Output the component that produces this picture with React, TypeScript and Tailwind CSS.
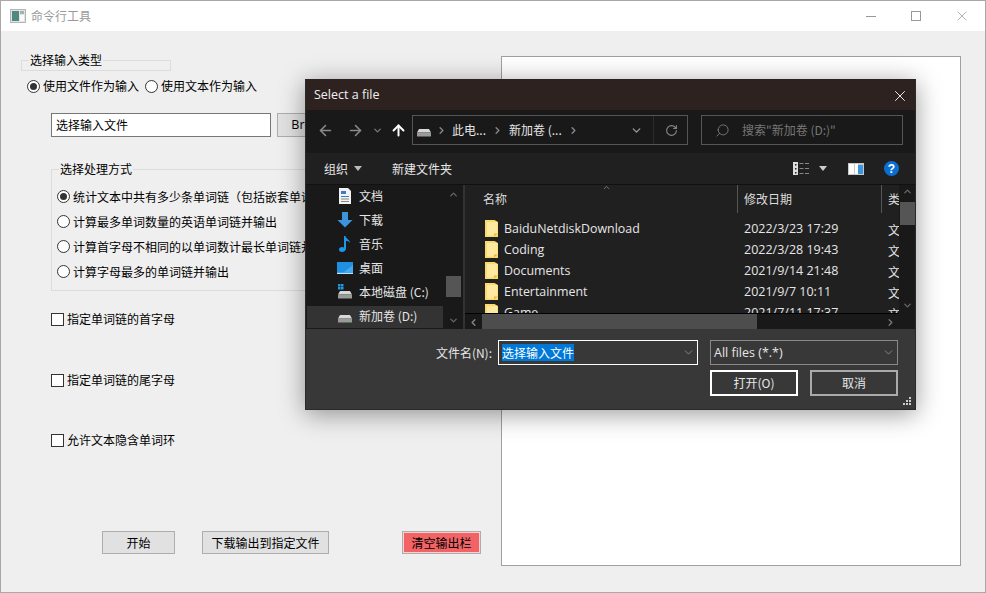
import { ArrowLeft, ArrowRight, ArrowUp, ChevronDown, ChevronRight, ChevronUp, ChevronLeft, RotateCw, Search, X } from "lucide-react";

const cjk = "font-['Noto_Sans_CJK_SC','Noto_Sans',sans-serif]";

function Radio({ checked = false }: { checked?: boolean }) {
  return (
    <span className="w-[13px] h-[13px] rounded-full border border-[#333] bg-white flex items-center justify-center shrink-0">
      {checked && <span className="w-[7px] h-[7px] rounded-full bg-[#333]" />}
    </span>
  );
}

function RadioRow({ label, checked }: { label: string; checked?: boolean }) {
  return (
    <div className="h-[25px] flex items-center gap-[3px] whitespace-nowrap">
      <Radio checked={checked} />
      <span>{label}</span>
    </div>
  );
}

function Check({ label, className }: { label: string; className: string }) {
  return (
    <div className={`h-[16px] ml-[50px] flex items-center gap-[3px] ${className}`}>
      <span className="w-[13px] h-[13px] border border-[#333] bg-white shrink-0" />
      <span>{label}</span>
    </div>
  );
}

function DriveIcon({ win = false }: { win?: boolean }) {
  return (
    <svg width="16" height="16" viewBox="0 0 16 16">
      {win && (
        <g fill="#1e9be8">
          <rect x="1" y="0" width="2.5" height="2.5" />
          <rect x="4" y="0" width="2.5" height="2.5" />
          <rect x="1" y="3" width="2.5" height="2.5" />
          <rect x="4" y="3" width="2.5" height="2.5" />
        </g>
      )}
      <path d="M3 7h10l2 3.5H1z" fill="#d8d8d8" />
      <rect x="1" y="10.5" width="14" height="4" fill="#9a9a9a" />
      <rect x="11.5" y="12" width="1.5" height="1.2" fill="#55d055" />
    </svg>
  );
}

function Folder() {
  return (
    <svg width="13" height="17" viewBox="0 0 13 17" className="shrink-0 -translate-y-px">
      <path d="M0 0h9.500L13 2v15H0z" fill="#fbd96b" />
      <path d="M2 2h10.500v11.500H9V15.500H2z" fill="#ffe9a0" />
      <path d="M9 16.500v-3h3.500z" fill="#e8b93f" />
    </svg>
  );
}

function NavRow({ icon, label, active }: { icon: React.ReactNode; label: string; active?: boolean }) {
  return (
    <div className={active ? "h-[22px] mt-[2px] pb-[2px] bg-[#333] flex items-center mx-px" : "h-[24px] flex items-center mx-px"}>
      <span className="w-[25px] ml-[25px] mr-[2px] flex justify-center">{icon}</span>
      <span className="text-[#e6e6e6]">{label}</span>
    </div>
  );
}

const files = [
  ["BaiduNetdiskDownload", "2022/3/23 17:29"],
  ["Coding", "2022/3/28 19:43"],
  ["Documents", "2021/9/14 21:48"],
  ["Entertainment", "2021/9/7 10:11"],
  ["Game", "2021/7/11 17:37"],
];

function FileDialog() {
  return (
    <div className={`absolute left-[304px] top-[78px] w-[611px] h-[331px] bg-[#383838] border border-[#2a2a2a] border-t-0 shadow-[0_4px_24px_rgba(0,0,0,0.4)] flex flex-col text-[12px] text-[#e6e6e6] ${cjk}`}>
      <div className="h-[31px] bg-[#2e2221] flex items-center justify-between pl-[8px] pr-[6px] pt-[2px] shrink-0">
        <span className="text-[12.5px] text-[#f0f0f0] font-['Open_Sans',sans-serif]">Select a file</span>
        <X size={18} strokeWidth={1.2} className="text-white" />
      </div>

      <div className="h-[43px] bg-[#191919] flex items-start pt-[5px] shrink-0">
        <div className="w-[106px] h-[30px] flex items-center pl-[11px]">
          <ArrowLeft size={17} strokeWidth={2.2} className="text-[#8a8a8a]" />
          <ArrowRight size={17} strokeWidth={2.2} className="text-[#8a8a8a] ml-[13px]" />
          <ChevronDown size={11} strokeWidth={3} className="text-[#777] ml-[8px]" />
          <ArrowUp size={17} strokeWidth={2.8} className="text-white ml-[7px]" />
        </div>
        <div className="w-[276px] h-[30px] border border-[#555] flex items-center">
          <span className="ml-[3px] flex"><DriveIcon /></span>
          <ChevronRight size={11} strokeWidth={3} className="text-[#888] ml-[4px]" />
          <span className="ml-[5px]">此电...</span>
          <ChevronRight size={11} strokeWidth={3} className="text-[#888] ml-[6px]" />
          <span className="ml-[6px]">新加卷 (...</span>
          <ChevronRight size={11} strokeWidth={3} className="text-[#888] ml-[6px]" />
          <span className="flex-1" />
          <span className="w-[33px] h-full flex items-center justify-center">
            <ChevronDown size={13} strokeWidth={2.5} className="text-[#999]" />
          </span>
          <span className="w-[34px] h-full border-l border-[#2c2c2c] flex items-center justify-center pl-px">
            <RotateCw size={13} strokeWidth={2} className="text-[#888]" />
          </span>
        </div>
        <div className="ml-[13px] w-[202px] h-[30px] border border-[#555] flex items-center pl-[13px] text-[#777]">
          <Search size={15} strokeWidth={1.5} className="text-[#777] -scale-x-100" />
          <span className="ml-[12px]">搜索"新加卷 (D:)"</span>
        </div>
      </div>

      <div className="h-[31px] bg-[#202020] flex items-center pl-[18px] shrink-0">
        <span>组织</span>
        <span className="ml-[6px] w-0 h-0 border-x-[4px] border-x-transparent border-t-[5px] border-t-[#bbb]" />
        <span className="ml-[30px]">新建文件夹</span>
        <span className="flex-1" />
        <svg width="17" height="13" viewBox="0 0 17 13">
          <rect x="0" y="0" width="5" height="13" fill="#ddd" />
          <g fill="#222">
            <rect x="2" y="2" width="1.5" height="1.5" />
            <rect x="2" y="6" width="1.5" height="1.5" />
            <rect x="2" y="10" width="1.5" height="1.5" />
          </g>
          <g fill="#888">
            <rect x="6.5" y="1" width="4" height="1" />
            <rect x="12" y="1" width="4" height="1" />
            <rect x="6.5" y="6" width="4" height="1" />
            <rect x="12" y="6" width="4" height="1" />
            <rect x="6.5" y="11" width="4" height="1" />
            <rect x="12" y="11" width="4" height="1" />
          </g>
        </svg>
        <span className="ml-[9px] w-0 h-0 border-x-[4px] border-x-transparent border-t-[5px] border-t-[#ccc]" />
        <svg width="16" height="12" viewBox="0 0 16 12" className="ml-[21px]">
          <rect width="16" height="12" fill="#c8c8c8" />
          <rect x="1" y="1" width="5" height="10" fill="#fff" />
          <rect x="7" y="1" width="3" height="10" fill="#fff" />
          <rect x="10" y="2" width="5" height="9" fill="#3c95e0" />
        </svg>
        <span className="ml-[20px] mr-[16px] w-[15px] h-[15px] rounded-full bg-[#0a6fd0] flex items-center justify-center text-white text-[12px] font-bold leading-none font-['Liberation_Sans',sans-serif]">?</span>
      </div>

      <div className="h-[145px] flex border-t border-[#111] shrink-0 bg-[#191919]">
        <div className="w-[138px] shrink-0 overflow-hidden -mt-px">
          <NavRow label="文档" icon={
            <svg width="12" height="16" viewBox="0 0 12 16">
              <path d="M0 0h9l3 3v13H0z" fill="#f2f2f2" />
              <g fill="#3a7fc4"><rect x="2" y="3" width="5" height="3" /><rect x="2" y="8" width="8" height="1" /></g>
              <g fill="#888"><rect x="2" y="10.5" width="8" height="1" /><rect x="2" y="13" width="8" height="1" /></g>
            </svg>} />
          <NavRow label="下载" icon={
            <svg width="16" height="16" viewBox="0 0 16 16">
              <path d="M5 0h6v8h4.500L8 15.500 0.500 8H5z" fill="#3d94dc" />
            </svg>} />
          <NavRow label="音乐" icon={
            <svg width="12" height="16" viewBox="0 0 12 16">
              <path d="M5 0h1.500c0.300 3 4.500 3.500 4.500 7-1-1.500-2.500-2.200-4-2.300V12.500C7 14.500 5 16 3 16S0 15 0 13.500 1.500 11 3 11c0.800 0 1.500 0.200 2 0.500z" fill="#1c97ea" />
            </svg>} />
          <NavRow label="桌面" icon={
            <svg width="16" height="12" viewBox="0 0 16 12">
              <rect width="16" height="12" fill="#1f8fe0" />
              <rect y="10.800" width="16" height="1.200" fill="#bfe2fa" />
              <path d="M6 10.800L16 3v7.800z" fill="#46a9ee" />
            </svg>} />
          <NavRow label="本地磁盘 (C:)" icon={<DriveIcon win />} />
          <NavRow label="新加卷 (D:)" active icon={<DriveIcon />} />
        </div>
        <div className="w-[19px] shrink-0 flex flex-col items-center">
          <ChevronUp size={11} strokeWidth={3} className="text-[#666] mt-[4px]" />
          <div className="w-[15px] h-[21px] bg-[#555] mt-[76px]" />
          <span className="flex-1" />
          <ChevronDown size={11} strokeWidth={3} className="text-[#666] mb-[3px]" />
        </div>
        <div className="w-[2px] shrink-0 bg-[#333]" />
        <div className="flex-1 min-w-0 flex flex-col bg-[#202020]">
          <div className="h-[128px] overflow-hidden shrink-0">
            <div className="h-[28px] flex items-center text-[#dcdcdc]">
              <div className="w-[273px] h-full pl-[18px] flex items-center border-r border-[#555] relative">
                <span>名称</span>
                <ChevronUp size={9} strokeWidth={1.5} className="absolute left-[137px] -top-[2px] text-[#bbb]" />
              </div>
              <div className="w-[144px] h-full pl-[6px] flex items-center border-r border-[#555]">修改日期</div>
              <div className="pl-[6px] w-[17px] overflow-hidden whitespace-nowrap">类型</div>
            </div>
            <div className="pt-[6px]">
              {files.map(([name, date]) => (
                <div key={name} className="h-[21px] flex items-center text-[#e6e6e6]">
                  <div className="w-[272px] flex items-center pl-[20px] gap-[6px]">
                    <Folder />
                    <span className="text-[12.4px] font-['Open_Sans',sans-serif]">{name}</span>
                  </div>
                  <div className="w-[144px] pl-[7px] text-[12.5px] font-['Open_Sans',sans-serif]">{date}</div>
                  <div className="w-[11px] ml-[7px] overflow-hidden">文</div>
                </div>
              ))}
            </div>
          </div>
          <div className="h-[17px] flex bg-[#191919] border-t border-[#000] shrink-0">
            <div className="w-[17px] flex items-center justify-center">
              <ChevronLeft size={11} strokeWidth={3} className="text-[#888]" />
            </div>
            <div className="w-[275px] bg-[#4d4d4d]" />
            <span className="flex-1" />
            <div className="w-[17px] flex items-center justify-center">
              <ChevronRight size={11} strokeWidth={3} className="text-[#777]" />
            </div>
          </div>
        </div>
        <div className="w-[16px] shrink-0 flex flex-col items-center bg-[#191919]">
          <ChevronUp size={11} strokeWidth={3} className="text-[#666] mt-[1px]" />
          <div className="w-[15px] h-[23px] bg-[#555] mt-[5px]" />
          <span className="flex-1" />
          <ChevronDown size={11} strokeWidth={3} className="text-[#666] mb-[18px]" />
        </div>
      </div>

      <div className="flex-1 bg-[#383838] relative pt-[11px]">
        <div className="flex items-center">
          <span className="w-[192px] text-right pr-[6px]">文件名(N):</span>
          <div className="w-[200px] h-[25px] border border-white flex items-center pl-[3px]">
            <span className="bg-[#0078d7] text-white leading-[17px] h-[17px]">选择输入文件</span>
            <span className="flex-1" />
            <ChevronDown size={13} strokeWidth={1.2} className="text-[#aaa] mr-[2px]" />
          </div>
          <div className="ml-[12px] w-[188px] h-[25px] border border-[#8a8a8a] flex items-center pl-[3px]">
            <span className="text-[12.5px] pt-px font-['Open_Sans',sans-serif]">All files (*.*)</span>
            <span className="flex-1" />
            <ChevronDown size={13} strokeWidth={1.2} className="text-[#aaa] mr-[2px]" />
          </div>
        </div>
        <div className="flex mt-[5px] ml-[404px] gap-[12px]">
          <button className="w-[88px] h-[26px] border-2 border-white text-[12px]">打开(O)</button>
          <button className="w-[88px] h-[26px] border-2 border-[#aaa] text-[12px]">取消</button>
        </div>
        <svg width="9" height="9" viewBox="0 0 9 9" className="absolute right-[3px] bottom-[3px]">
          <g fill="#ccc">
            <rect x="6" y="0" width="2" height="2" />
            <rect x="3" y="3" width="2" height="2" />
            <rect x="6" y="3" width="2" height="2" />
            <rect x="0" y="6" width="2" height="2" />
            <rect x="3" y="6" width="2" height="2" />
            <rect x="6" y="6" width="2" height="2" />
          </g>
        </svg>
      </div>
    </div>
  );
}

export default function App() {
  return (
    <div className={`relative w-[986px] h-[593px] overflow-hidden border border-[#a8a8a8] bg-[#efefef] text-[12px] text-black ${cjk}`}>
      <div className="h-[30px] bg-white flex items-center">
        <svg width="16" height="14" viewBox="0 0 16 14" className="ml-[9px]">
          <rect x="0.500" y="0.500" width="15" height="13" fill="#e4e4e4" stroke="#b5b5b5" />
          <rect x="2" y="2" width="7" height="10" fill="#4f8a80" />
          <rect x="10" y="2" width="4" height="3" fill="#9fb5b0" />
          <rect x="10" y="6" width="4" height="6" fill="#fafafa" />
        </svg>
        <span className="ml-[5px] text-[#9a9a9a]">命令行工具</span>
        <span className="flex-1" />
        <span className="w-[10px] h-px bg-[#999]" />
        <span className="ml-[35px] w-[10px] h-[10px] border border-[#999]" />
        <X size={16} strokeWidth={1} className="ml-[33px] mr-[15px] text-[#888]" />
      </div>

      <div className="flex">
        <div className="w-[500px] shrink-0 overflow-hidden">
          <fieldset className="ml-[20px] mt-[21px] w-[150px] h-[19px] border border-[#dcdcdc]">
            <legend className="ml-[7px] px-px leading-[16px]">选择输入类型</legend>
          </fieldset>
          <div className="mt-[7px] ml-[26px] h-[16px] flex items-center gap-[3px] whitespace-nowrap">
            <Radio checked />
            <span>使用文件作为输入</span>
            <span className="ml-[3px]"><Radio /></span>
            <span>使用文本作为输入</span>
          </div>
          <div className="mt-[19px] ml-[50px] flex items-center gap-[6px]">
            <div className="w-[220px] h-[24px] border border-[#777] bg-white flex items-center pl-[4px]">选择输入文件</div>
            <button className="w-[72px] h-[24px] border border-[#adadad] bg-[#e1e1e1] font-['Open_Sans',sans-serif] text-[12.5px]">Browse</button>
          </div>
          <fieldset className="mt-[24px] ml-[50px] w-[420px] h-[130px] border border-[#dcdcdc] pl-[5px]">
            <legend className="ml-[2px] px-px leading-[16px]">选择处理方式</legend>
            <div className="mt-[7px]">
              <RadioRow checked label="统计文本中共有多少条单词链（包括嵌套单词链）" />
              <RadioRow label="计算最多单词数量的英语单词链并输出" />
              <RadioRow label="计算首字母不相同的以单词数计最长单词链并输出" />
              <RadioRow label="计算字母最多的单词链并输出" />
            </div>
          </fieldset>
          <Check label="指定单词链的首字母" className="mt-[20px]" />
          <Check label="指定单词链的尾字母" className="mt-[45px]" />
          <Check label="允许文本隐含单词环" className="mt-[44px]" />
          <div className="mt-[83px] flex">
            <button className="ml-[101px] w-[73px] h-[23px] border border-[#adadad] bg-[#e1e1e1]">开始</button>
            <button className="ml-[27px] w-[127px] h-[23px] border border-[#adadad] bg-[#e1e1e1]">下载输出到指定文件</button>
            <button className="ml-[73px] w-[79px] h-[23px] border border-[#adadad] bg-[#f26366] outline outline-1 -outline-offset-2 outline-white/70">清空输出栏</button>
          </div>
        </div>
        <div className="w-[460px] h-[510px] mt-[25px] bg-white border border-[#a0a0a0] shrink-0" />
      </div>

      <FileDialog />
    </div>
  );
}
